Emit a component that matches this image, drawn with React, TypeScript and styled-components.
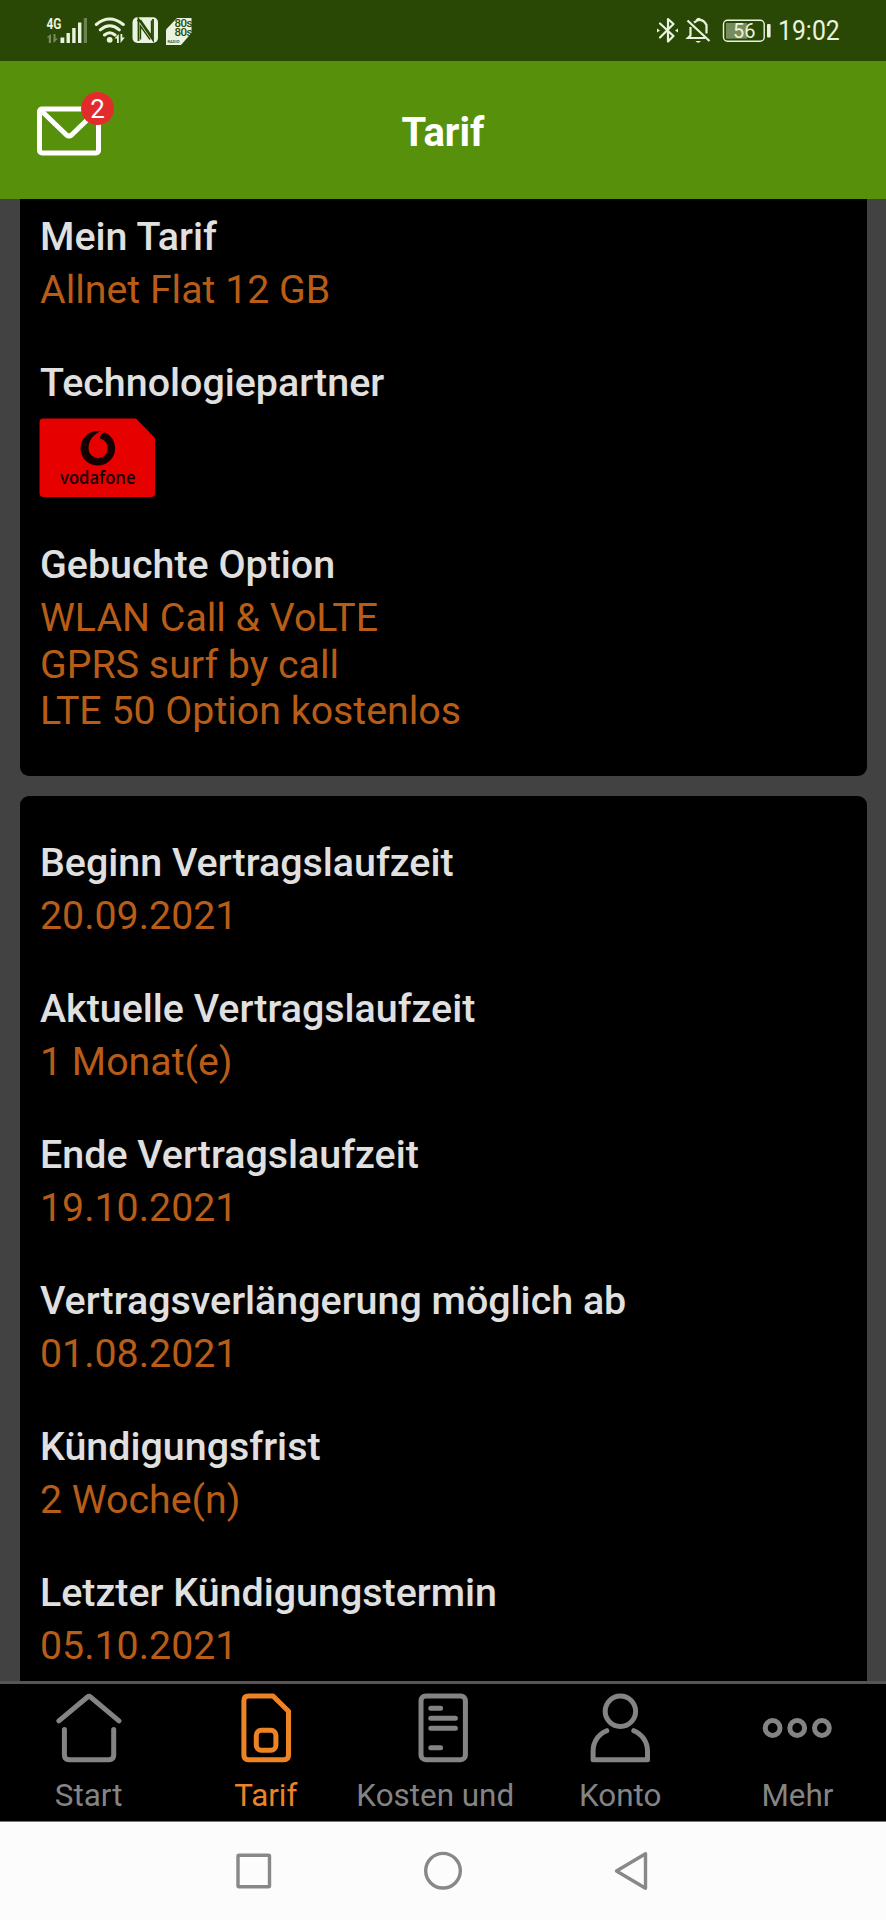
import React from "react";
import styled, { createGlobalStyle } from "styled-components";

const GlobalStyle = createGlobalStyle`
  * { box-sizing: border-box; }
  body { margin: 0; background: #fcfcfc; font-family: Roboto, "Liberation Sans", sans-serif; }
`;

const Screen = styled.div`
  width: 886px;
  height: 1920px;
  display: flex;
  flex-direction: column;
  overflow: hidden;
  background: #424242;
`;

const StatusBar = styled.div`
  height: 61px;
  flex: none;
  display: flex;
  align-items: center;
  justify-content: space-between;
  padding: 0 47px 0 45px;
  background: #2a4805;
  color: #eaf3df;
`;

const StatusGroup = styled.div`
  display: flex;
  align-items: center;
`;

const Clock = styled.div`
  width: 61px;
  margin-left: 6px;
  font-size: 28.5px;
  line-height: 34px;
  white-space: nowrap;
  span {
    display: inline-block;
    transform: scaleX(0.87);
    transform-origin: left;
  }
`;

const Header = styled.header`
  height: 138px;
  flex: none;
  display: grid;
  grid-template-columns: 1fr auto 1fr;
  align-items: center;
  padding: 0 36px;
  background: #57910b;
  color: #fff;
`;

const Title = styled.h1`
  margin: 5px 0 0;
  font-size: 40px;
  line-height: 46px;
  font-weight: 700;
`;

const MailButton = styled.div`
  position: relative;
  width: 66px;
  height: 50px;
  margin-top: 1px;
  svg { display: block; }
`;

const Badge = styled.span`
  position: absolute;
  left: 45px;
  top: -14px;
  width: 33px;
  height: 33px;
  border-radius: 50%;
  background: #e22c2c;
  font-size: 26px;
  line-height: 34px;
  text-align: center;
`;

const Content = styled.main`
  height: 1482px;
  flex: none;
  overflow: hidden;
  display: flex;
  flex-direction: column;
  gap: 20px;
  padding: 0 19.5px 0 20px;
`;

const Card = styled.section<{ $first?: boolean }>`
  flex: none;
  display: flex;
  flex-direction: column;
  gap: 46.1px;
  padding: ${(p) => (p.$first ? "15px 20px 41px" : "43.7px 20px 41px")};
  height: ${(p) => (p.$first ? "577px" : "auto")};
  border-radius: ${(p) => (p.$first ? "0 0 9px 9px" : "9px")};
  background: #000;
`;

const Field = styled.div<{ $gap?: number }>`
  display: flex;
  flex-direction: column;
  gap: ${(p) => p.$gap ?? 6.6}px;
`;

const Label = styled.div`
  color: #e0e0e0;
  font-size: 39.4px;
  font-weight: 500;
  line-height: 46.7px;
  white-space: nowrap;
`;

const Value = styled.div`
  color: #b85d17;
  font-size: 39.3px;
  line-height: 46.7px;
  white-space: nowrap;
`;

const Logo = styled.svg`
  display: block;
  margin-left: -1px;
  margin-bottom: -2.3px;
`;

const TabBar = styled.nav`
  height: 140px;
  flex: none;
  display: grid;
  grid-template-columns: repeat(5, 1fr);
  overflow: hidden;
  border-top: 3px solid #555;
  background: #000;
`;

const Tab = styled.div<{ $active?: boolean }>`
  display: flex;
  flex-direction: column;
  align-items: center;
  padding-top: 9px;
  color: ${(p) => (p.$active ? "#ee8326" : "#848484")};
  svg { flex: none; }
`;

const TabLabel = styled.div`
  width: min-content;
  margin-top: 14px;
  font-size: 31.4px;
  line-height: 37.6px;
`;

const NavBar = styled.div`
  height: 99px;
  flex: none;
  display: flex;
  justify-content: space-between;
  padding: 29px 234px 0 234px;
  border-top: 1px solid #777;
  background: #fcfcfc;
`;

const stroke = {
  fill: "none",
  stroke: "currentColor",
  strokeWidth: 5,
  strokeLinecap: "round" as const,
  strokeLinejoin: "round" as const,
};

const TabIcon = ({ children }: { children: React.ReactNode }) => (
  <svg width="70" height="70" viewBox="0 0 70 70" {...stroke}>{children}</svg>
);

const tabs = [
  {
    label: "Start",
    icon: <><path d="M4.9 27.8 33.5 4q1.5-1.2 3 0L65 27.8" /><path d="M10.4 36.5V62q0 4.7 4.7 4.7H55q4.7 0 4.7-4.7V36.5" /></>,
  },
  {
    label: "Tarif",
    active: true,
    icon: <><path d="M17.5 3H42L57.5 18.3V62q0 4.7-4.7 4.7H17.5q-4.6 0-4.6-4.7V7.6Q12.9 3 17.5 3Z" /><rect x="25.3" y="37.3" width="19.6" height="20" rx="5" /></>,
  },
  {
    label: "Kosten\u00a0und Rechnungen",
    icon: <><rect x="13" y="3" width="44.4" height="63.7" rx="4.7" /><path d="M22.8 15.3h9.8M22.8 25.3h24.6M22.8 35.2h24.6M22.8 54.7h9.8" /></>,
  },
  {
    label: "Konto",
    icon: <><circle cx="35.4" cy="18.3" r="15.2" /><path d="M21.8 37.7C13.5 41 8.1 49 8.1 58v8.7h54.4V58C62.5 49 57 41 48.8 37.7" /></>,
  },
  {
    label: "Mehr",
    icon: <><circle cx="10.6" cy="35" r="7.4" /><circle cx="35.2" cy="35" r="7.4" /><circle cx="59.9" cy="35" r="7.4" /></>,
  },
];

const terms = [
  ["Beginn Vertragslaufzeit", "20.09.2021"],
  ["Aktuelle Vertragslaufzeit", "1 Monat(e)"],
  ["Ende Vertragslaufzeit", "19.10.2021"],
  ["Vertragsverlängerung möglich ab", "01.08.2021"],
  ["Kündigungsfrist", "2 Woche(n)"],
  ["Letzter Kündigungstermin", "05.10.2021"],
];

const NetworkIcons = () => (
  <svg width="150" height="30" viewBox="45 16 150 30" fill="currentColor">
    <text x="46.5" y="29" fontSize="14.5" fontWeight="700" textLength="15" lengthAdjust="spacingAndGlyphs">4G</text>
    <path opacity=".4" d="M46.5 37.5 51 34v9h-2.2v-5.5zM53.5 34h2v4.500h2.500L53.500 43z" />
    <path d="M60.500 37.500h3.800V43h-3.800zM66.500 33h3.400v10h-3.400zM72.200 28h3.400v15h-3.400zM78 22.500h3.400V43H78z" />
    <path opacity=".35" d="M83.800 18H87v25h-3.200z" />
    <g fill="none" stroke="currentColor" strokeWidth="3" strokeLinecap="round">
      <path d="M96.300 24.500Q109.500 13.500 123.300 24.500M100.300 29.800q9.500-8 19 0M104.500 35q5.300-4.500 10.500 0" />
    </g>
    <circle cx="109.700" cy="39.800" r="2.900" />
    <path d="M114.500 38.500 118.800 34v9h-1.800v-4.500zM120.500 34h1.800v3.500h2.500L120.500 43z" />
    <rect x="132.500" y="17.300" width="25.500" height="25.700" rx="5" />
    <path d="M138.500 41V19L153 40V19" fill="none" stroke="#2a4805" strokeWidth="1.800" />
    <path d="M137 20.500h3.800L151.500 36V20.500M140.500 39.500V26l9.500 13.500" fill="none" stroke="#2a4805" strokeWidth="1.400" />
    <path d="M166 29.500 177 18h14.500v15L181 45h-15z" />
    <g fill="#2a4805" fontWeight="500">
      <text x="174.500" y="26.500" fontSize="11.500" textLength="18">80s</text>
      <text x="174.500" y="36" fontSize="11.500" textLength="18">80s</text>
      <text x="167.500" y="43.300" fontSize="4" textLength="12">RADIO</text>
    </g>
  </svg>
);

const SystemIcons = () => (
  <svg width="116" height="30" viewBox="656 16 116 30" fill="none" stroke="currentColor" strokeWidth="2.200">
    <path d="M660 23.500 673.500 36 668 41.500V19l5.500 5L660 37.500" strokeLinejoin="round" strokeLinecap="round" />
    <path d="m657 28.500 3 2-3 2zM678 28.500l-3 2 3 2z" fill="currentColor" stroke="none" />
    <path d="m687.500 20.500 22 20.500M690.500 27v8.500l-2.500 2.500h17M694 22.500q8-6 12.500 2.500v8.500M696.500 20.500q2.500-3.500 4 0" />
    <path d="M695.500 41h5.500q-2.700 3.500-5.500 0z" fill="currentColor" stroke="none" />
    <rect x="723.500" y="20.300" width="40.700" height="21" rx="4" strokeWidth="1.400" />
    <path d="M726 23h21v15.700h-21z" fill="currentColor" opacity=".4" stroke="none" />
    <rect x="767" y="24" width="3.600" height="13.500" rx="1" fill="currentColor" stroke="none" />
    <text x="733" y="38" fontSize="21" fill="currentColor" stroke="none" textLength="22.500" lengthAdjust="spacingAndGlyphs">56</text>
  </svg>
);

const VodafoneLogo = () => (
  <Logo width="117" height="80" viewBox="0 0 117 80">
    <path d="M4 .5H97L116 20V75q0 4-4 4H4.500q-4 0-4-4V4.500q0-4 3.500-4Z" fill="#e60000" />
    <circle cx="58.800" cy="30.300" r="17.300" fill="#150000" />
    <path d="M49.500 30.500C49.500 22.500 54.500 15.500 62.500 13.200Q65 13 66.500 14.100C62.500 15 60.700 18.500 61.200 20.700 66.500 22 68.800 26 68.800 30.500A9.650 9.650 0 0 1 49.500 30.500Z" fill="#e60000" />
    <text x="21" y="66.300" fill="#150000" fontFamily="Open Sans" fontWeight="600" fontSize="17.500" textLength="75.500" lengthAdjust="spacingAndGlyphs">vodafone</text>
  </Logo>
);

export default function App() {
  return (
    <>
      <GlobalStyle />
      <Screen>
        <StatusBar>
          <StatusGroup><NetworkIcons /></StatusGroup>
          <StatusGroup><SystemIcons /><Clock><span>19:02</span></Clock></StatusGroup>
        </StatusBar>
        <Header>
          <MailButton>
            <svg width="66" height="50" viewBox="0 0 66 50" {...stroke}>
              <rect x="3.500" y="3" width="59" height="44" rx="2.500" />
              <path d="m4.500 4 26 25q2.500 2 5 0l26-25" />
            </svg>
            <Badge>2</Badge>
          </MailButton>
          <Title>Tarif</Title>
        </Header>
        <Content>
          <Card $first>
            <Field>
              <Label>Mein Tarif</Label>
              <Value>Allnet Flat 12 GB</Value>
            </Field>
            <Field $gap={11}>
              <Label>Technologiepartner</Label>
              <VodafoneLogo />
            </Field>
            <Field>
              <Label>Gebuchte Option</Label>
              <Value>WLAN Call &amp; VoLTE<br />GPRS surf by call<br />LTE 50 Option kostenlos</Value>
            </Field>
          </Card>
          <Card>
            {terms.map(([label, value]) => (
              <Field key={label}>
                <Label>{label}</Label>
                <Value>{value}</Value>
              </Field>
            ))}
          </Card>
        </Content>
        <TabBar>
          {tabs.map((tab) => (
            <Tab key={tab.label} $active={tab.active}>
              <TabIcon>{tab.icon}</TabIcon>
              <TabLabel>{tab.label}</TabLabel>
            </Tab>
          ))}
        </TabBar>
        <NavBar>
          <svg width="40" height="40" viewBox="0 0 40 40" fill="none" stroke="#888" strokeWidth="3.400" strokeLinejoin="round"><rect x="4" y="4.200" width="31.500" height="31.500" rx="1" /></svg>
          <svg width="40" height="40" viewBox="0 0 40 40" fill="none" stroke="#888" strokeWidth="3.400"><circle cx="20" cy="19.700" r="17.300" /></svg>
          <svg width="40" height="40" viewBox="0 0 40 40" fill="none" stroke="#888" strokeWidth="3.400" strokeLinejoin="round"><path d="M33.500 2.700v34.600L4.500 20z" /></svg>
        </NavBar>
      </Screen>
    </>
  );
}
